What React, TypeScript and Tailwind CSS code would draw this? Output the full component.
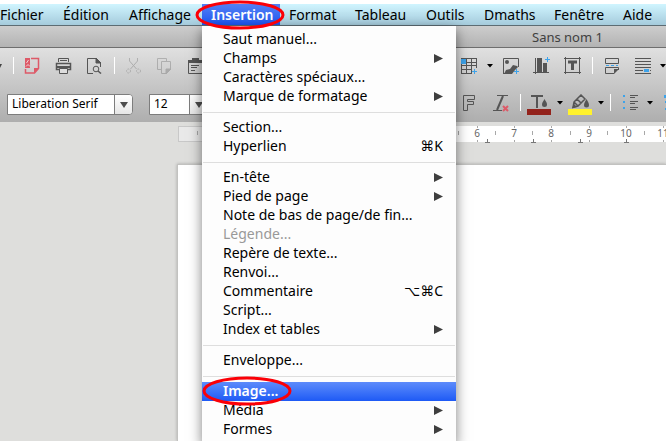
import type { ReactNode } from "react";

const INK = "#555555";
const BLUE = "#3da3ea";

function Icon({ children, wide = false, tall = false }: { children: ReactNode; wide?: boolean; tall?: boolean }) {
  const w = wide ? 25 : 17;
  const h = tall ? 21 : 17;
  return (
    <svg width={w} height={h} viewBox={`0 0 ${w} ${h}`} fill="none" stroke={INK} aria-hidden="true" className="shrink-0">
      {children}
    </svg>
  );
}

function Tool({ label, faded = false, children }: { label: string; faded?: boolean; children: ReactNode }) {
  return (
    <button type="button" aria-label={label} disabled={faded} className="flex w-[31px] shrink-0 justify-center disabled:opacity-30">
      {children}
    </button>
  );
}

function Caret({ label }: { label: string }) {
  return (
    <button type="button" aria-label={label} className="flex h-[17px] w-[10px] shrink-0 items-center justify-center">
      <svg width="6" height="4" viewBox="0 0 6 4" aria-hidden="true">
        <path d="M0 0h6L3 3.5z" fill="#000" />
      </svg>
    </button>
  );
}

function Divider() {
  return (
    <div className="flex w-2 shrink-0 justify-center">
      <div className="h-[17px] w-px bg-white" />
    </div>
  );
}

function Combo({ label, value, size }: { label: string; value: string; size: string }) {
  return (
    <div className={`flex h-[21px] shrink-0 rounded-r-[4px] border border-[#7d7d7d] bg-white ${size}`}>
      <input
        aria-label={label}
        defaultValue={value}
        className="min-w-0 flex-1 bg-transparent pb-[2px] pl-1 text-[12px] leading-[17px] text-black outline-none"
      />
      <button
        type="button"
        aria-label={`${label} : liste`}
        className="flex w-[18px] shrink-0 items-center justify-center rounded-r-[3px] border-l border-[#7d7d7d] bg-linear-to-b from-white to-[#e6e6e6]"
      >
        <svg width="8" height="6" viewBox="0 0 8 6" aria-hidden="true">
          <path d="M0 0h8L4 6z" fill="#4c4c4c" />
        </svg>
      </button>
    </div>
  );
}

function Circled() {
  return (
    <svg width="90" height="30" viewBox="0 0 90 30" fill="none" aria-hidden="true">
      <ellipse cx="45" cy="15" rx="43" ry="13" stroke="#fb0007" strokeWidth="3" />
    </svg>
  );
}

type Entry = { text: string; keys?: string; sub?: boolean; off?: boolean; on?: boolean };

const groups: Entry[][] = [
  [
    { text: "Saut manuel..." },
    { text: "Champs", sub: true },
    { text: "Caractères spéciaux..." },
    { text: "Marque de formatage", sub: true },
  ],
  [{ text: "Section..." }, { text: "Hyperlien", keys: "⌘K" }],
  [
    { text: "En-tête", sub: true },
    { text: "Pied de page", sub: true },
    { text: "Note de bas de page/de fin..." },
    { text: "Légende...", off: true },
    { text: "Repère de texte..." },
    { text: "Renvoi..." },
    { text: "Commentaire", keys: "⌥⌘C" },
    { text: "Script..." },
    { text: "Index et tables", sub: true },
  ],
  [{ text: "Enveloppe..." }],
  [{ text: "Image...", on: true }, { text: "Média", sub: true }, { text: "Formes", sub: true }],
];

function MenuRow({ entry }: { entry: Entry }) {
  const tone = entry.on
    ? "bg-linear-to-b from-[#5d8bfb] to-[#1d59f5] font-semibold text-white"
    : "text-black disabled:text-[#999999]";
  return (
    <button
      type="button"
      role="menuitem"
      disabled={entry.off}
      className={`relative flex h-[19px] w-full items-center justify-between pr-[13px] pl-[21px] text-left leading-[17px] ${tone}`}
    >
      <span className="pb-[2px]">{entry.text}</span>
      {entry.keys && <span className="pb-[2px]">{entry.keys}</span>}
      {entry.sub && (
        <svg width="9" height="9" viewBox="0 0 9 9" aria-hidden="true">
          <path d="M0 0v9l9-4.500z" fill="#3f3f3f" />
        </svg>
      )}
      {entry.on && (
        <span className="absolute top-[-6px] left-0 z-10">
          <Circled />
        </span>
      )}
    </button>
  );
}

function InsertMenu() {
  return (
    <div
      role="menu"
      aria-label="Insertion"
      className="absolute top-full left-0 z-10 mt-px w-[254px] bg-[#fdfdfd] py-1 shadow-[0_4px_12px_rgba(0,0,0,0.5)]"
    >
      {groups.map((group, i) => (
        <div key={group[0].text}>
          {i > 0 && <hr className="mx-px mt-[6px] mb-[5px] border-t border-[#dedede]" />}
          {group.map((entry) => (
            <MenuRow key={entry.text} entry={entry} />
          ))}
        </div>
      ))}
    </div>
  );
}

const menus = [
  { text: "Fichier", size: "w-[54px] pl-0" },
  { text: "Édition", size: "w-[66px] pl-[9px]" },
  { text: "Affichage", size: "w-[82px] pl-[9px]" },
  { text: "Insertion", size: "w-[78px] pl-[9px]" },
  { text: "Format", size: "w-[66px] pl-[9px]" },
  { text: "Tableau", size: "w-[71px] pl-[9px]" },
  { text: "Outils", size: "w-[58px] pl-[9px]" },
  { text: "Dmaths", size: "w-[70px] pl-[9px]" },
  { text: "Fenêtre", size: "w-[69px] pl-[9px]" },
  { text: "Aide", size: "w-[54px] pl-[9px]" },
];

function MenuBar() {
  return (
    <nav className="flex h-[22px] shrink-0 border-b border-[#5d6c73] bg-linear-to-b from-[#d0f5ff] to-[#a5cbdc]">
      {menus.map((m) => {
        const open = m.text === "Insertion";
        return (
          <div key={m.text} className={`relative shrink-0 ${open ? "z-10" : ""}`}>
            <button
              type="button"
              aria-haspopup="menu"
              aria-expanded={open}
              className={`block h-[21px] text-left leading-[21px] ${m.size} ${
                open ? "bg-linear-to-b from-[#5480f4] to-[#1d55f2] font-semibold text-white" : "text-black"
              }`}
            >
              {m.text}
            </button>
            {open && (
              <>
                <InsertMenu />
                <span className="pointer-events-none absolute top-[-4px] left-[-7px] z-20">
                  <Circled />
                </span>
              </>
            )}
          </div>
        );
      })}
    </nav>
  );
}

function StandardBar() {
  return (
    <div className="flex h-[35px] items-center">
      <div className="flex w-[9px] shrink-0 items-center">
        <svg width="3" height="4" viewBox="0 0 3 4" aria-hidden="true">
          <path d="M0 0h2L0 4z" fill="#444" />
        </svg>
      </div>
      <Divider />
      <Tool label="Exporter en PDF">
        <Icon>
          <path d="M1 1h5v10H1z" fill="#dd5a68" stroke="none" />
          <path d="M2.500 6l2-3M2 9.500l2-2 2 2" stroke="#f0d4d6" />
          <path d="M7 1.500h7.500v10l-4 4.500H6" stroke="#dd5a68" strokeWidth="1.500" />
          <path d="M10 11h5l-5 5z" fill="#dd5a68" stroke="none" />
          <path d="M1.500 12v4H6" stroke="#dd5a68" strokeWidth="1.500" />
        </Icon>
      </Tool>
      <Tool label="Imprimer">
        <Icon>
          <path d="M3.500 5V1.500h10V5M5 3.500h7" />
          <path d="M1.500 6.500h14v6h-14z" strokeWidth="1.500" />
          <path d="M1 10h15" strokeWidth="2" />
          <path d="M4.500 11.500h8v5h-8z" fill="#ddd" />
        </Icon>
      </Tool>
      <Tool label="Aperçu">
        <Icon>
          <path d="M7 16.500H1.500v-15H10l4.500 4.500v4" />
          <path d="M10 1v5h5z" fill={INK} />
          <circle cx="10" cy="12" r="2.800" />
          <path d="M12 14l3 2.500" strokeWidth="1.500" />
        </Icon>
      </Tool>
      <Divider />
      <Tool label="Couper" faded>
        <Icon>
          <path d="M4.500 1v3l7 8M12.500 1v3l-7 8" />
          <circle cx="3.500" cy="14" r="2" strokeDasharray="1.500 1" />
          <circle cx="13.500" cy="14" r="2" strokeDasharray="1.500 1" />
        </Icon>
      </Tool>
      <Tool label="Copier" faded>
        <Icon>
          <path d="M5 12.500H1.500v-11h9V4" />
          <path d="M10 16.500H5.500v-12h9V12z" />
          <path d="M10 12v5l5-5z" fill={INK} />
        </Icon>
      </Tool>
      <Tool label="Coller">
        <Icon>
          <path d="M1.500 3.500h14v13h-14z" />
          <path d="M1 3h15v3H1zM5 1h7v3H5z" fill={INK} stroke="none" />
          <path d="M4 8.500h8M4 10.500h6M4 13.500h4" />
        </Icon>
      </Tool>
      <div className="w-[243px] shrink-0" />
      <Tool label="Insérer un tableau">
        <Icon>
          <path d="M0 1.500h16M.5 1v16M0 5.500h16M0 8.500h16M0 12.500h11M0 16.500h11M5.500 1v16M10.500 1v16M15.500 1v10" />
          <path d="M0 2h5v5H0z" fill={BLUE} stroke="none" />
          <path d="M13.500 12v5M11 14.500h5" stroke={BLUE} />
        </Icon>
      </Tool>
      <Caret label="Options de tableau" />
      <Tool label="Insérer une image">
        <Icon>
          <path d="M1.500 17V1.500h15V10M1 16.500h9" />
          <circle cx="5" cy="5" r="2" fill={INK} stroke="none" />
          <path d="M2 17l2-4 4-1 3-4 4 1 1 1-3 3-3 4z" fill={INK} stroke="none" />
          <path d="M14.500 12v5M12 14.500h5" stroke={BLUE} />
        </Icon>
      </Tool>
      <Tool label="Insérer un diagramme">
        <Icon>
          <path d="M0 15.500h16M2.500 1v16" />
          <path d="M4 1h5v15H4zM10 6h4v10h-4z" fill={INK} stroke="none" />
          <path d="M14.500 0v5M12 2.500h5" stroke={BLUE} />
        </Icon>
      </Tool>
      <Tool label="Zone de texte">
        <Icon>
          <path d="M1.500 0v17M15.500 0v17M0 1.500h17M0 15.500h17" />
          <path d="M4 5h9M8.500 5v8" strokeWidth="3" />
        </Icon>
      </Tool>
      <Divider />
      <Tool label="Saut de page">
        <Icon>
          <path d="M2.500 1.500h13v5h-13zM15.500 13v-2.500h-13v6H11" />
          <path d="M11 12h5l-5 5z" fill={INK} stroke="none" />
          <path d="M3 8.500h12" stroke={BLUE} strokeDasharray="3 2" />
        </Icon>
      </Tool>
      <Tool label="Insérer un champ">
        <Icon>
          <path d="M1 1.500h16M1 4.500h16M1 7.500h16M1 10.500h16M1 13.500h8M16 13.500h1M1 16.500h16" />
          <path d="M10 12h5v3h-5z" fill={BLUE} stroke="none" />
        </Icon>
      </Tool>
      <Caret label="Options de champ" />
    </div>
  );
}

function FormatBar() {
  return (
    <div className="flex h-[39px] items-start pt-[11px]">
      <div className="flex w-[454px] shrink-0 gap-4 pl-[7px]">
        <Combo label="Police" value="Liberation Serif" size="w-[126px]" />
        <Combo label="Taille" value="12" size="w-[59px]" />
      </div>
      <Tool label="Contour">
        <Icon tall>
          <path d="M2.500 1.500h11v4h-7v2h6v3h-6v6h-4z" />
        </Icon>
      </Tool>
      <Tool label="Effacer le formatage">
        <Icon tall>
          <path d="M5 1.500h11M1 16.500h9" />
          <path d="M11 2L5 16" strokeWidth="2" />
          <path d="M11 12l5 5M16 12l-5 5" stroke="#dd5a68" strokeWidth="2" />
        </Icon>
      </Tool>
      <Divider />
      <Tool label="Couleur de police">
        <Icon wide tall>
          <path d="M4 2h12M10 2v12" strokeWidth="2" />
          <path d="M17.500 5c1 2 2.500 3.500 2.500 5.500a2.500 2.500 0 0 1-5 0C15 8.500 16.500 7 17.500 5z" fill={INK} stroke="none" />
          <path d="M0 15h24v6H0z" fill="#93231c" stroke="none" />
        </Icon>
      </Tool>
      <Caret label="Choisir la couleur de police" />
      <Tool label="Surlignage">
        <Icon wide tall>
          <path d="M6 8l7-7 4 4-7 7-5 1.500zM9 5l4 4M6 8l4 4" strokeWidth="1.500" />
          <path d="M4 14l2-4 3 3z" fill={INK} stroke="none" />
          <path d="M18.500 5c1 2 2.500 4 2.500 6a2.500 2.500 0 0 1-5 0C16 9 17.500 7 18.500 5z" fill={INK} stroke="none" />
          <path d="M0 15h24v6H0z" fill="#fff22d" stroke="none" />
        </Icon>
      </Tool>
      <Caret label="Choisir le surlignage" />
      <Divider />
      <Tool label="Puces">
        <Icon tall>
          <path d="M2 1h2v2H2zM2 7h2v2H2zM2 13h2v2H2z" fill={BLUE} stroke="none" />
          <path d="M9 1.500h8M9 3.500h5M9 7.500h8M9 9.500h5M9 13.500h8M9 15.500h6" />
        </Icon>
      </Tool>
      <Caret label="Choisir les puces" />
      <Tool label="Numérotation">
        <Icon tall>
          <path d="M3 1v3M3 8h2M3 15h2" stroke={BLUE} strokeWidth="2" />
        </Icon>
      </Tool>
    </div>
  );
}

const ORIGIN = 75;
const STEP = 37.3;
const ticks = Array.from({ length: 13 }, (_, i) => i - 1);
const numbers = [6, 7, 8, 9, 10, 11];

function Ruler() {
  return (
    <div className="ml-[178px] flex h-4 bg-white">
      <svg width="488" height="18" viewBox="0 0 488 18" className="shrink-0" aria-label="Règle">
        <rect x="0.5" y="0.5" width="75" height="15" fill="#e9e9e9" stroke="#c8c8c8" />
        {ticks.map((n) => (
          <path key={n} d={`M${Math.round(ORIGIN + n * STEP) - 18.5} 5v4`} stroke="#a8a8a8" />
        ))}
        {numbers.map((n) => {
          const x = Math.round(ORIGIN + n * STEP);
          return (
            <g key={n}>
              <path d={`M${x + 0.5} 0v2M${x + 0.5} 14v2`} stroke="#a8a8a8" />
              <text x={x} y="11" textAnchor="middle" fontSize="10" fill="#666666">
                {n}
              </text>
            </g>
          );
        })}
        {[309, 355, 402, 448].map((x) => (
          <path key={x} d={`M${x + 0.5} 13v3M${x - 2} 16.500h5`} stroke="#777777" />
        ))}
      </svg>
    </div>
  );
}

export default function App() {
  return (
    <div className="flex h-screen w-full flex-col overflow-hidden bg-[#dededc] font-['Noto_Sans','DejaVu_Sans',sans-serif] text-[14px]">
      <div className="h-1 shrink-0 bg-white" />
      <MenuBar />
      <header className="flex h-[22px] shrink-0 border-b border-[#6e6e6e] bg-linear-to-b from-[#cdcdcd] to-[#b3b3b3] pl-[532px]">
        <h1 className="text-[13px] leading-[22px] whitespace-nowrap text-[#404040]">Sans nom 1</h1>
      </header>
      <div className="shrink-0 bg-linear-to-b from-[#e0e0e0] to-[#aeaeae]">
        <StandardBar />
        <FormatBar />
      </div>
      <main className="flex min-h-0 flex-1 flex-col pt-1">
        <Ruler />
        <div className="mt-[22px] ml-[177px] flex-1 border-t border-l border-[#c2c2c0] bg-white shadow-[0_0_3px_rgba(0,0,0,0.25)]" />
      </main>
    </div>
  );
}
